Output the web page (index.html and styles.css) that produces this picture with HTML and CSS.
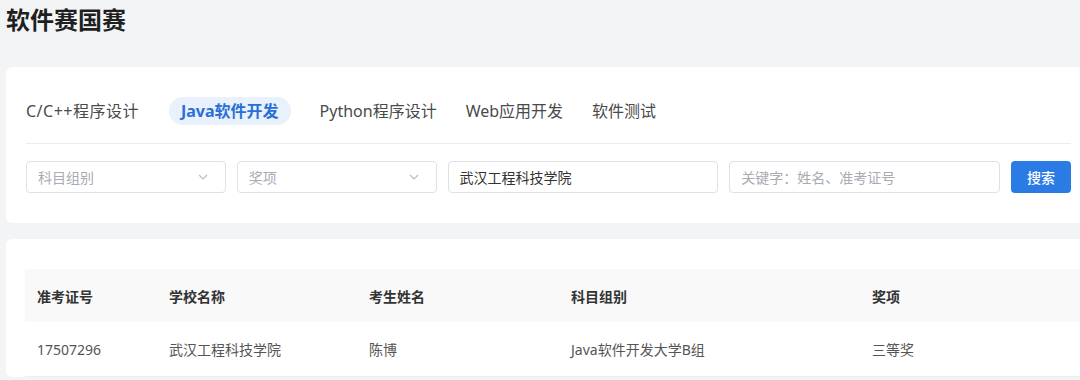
FILE: index.html
```html
<!DOCTYPE html>
<html lang="zh-CN">
<head>
    <meta charset="UTF-8">
    <meta name="viewport" content="width=device-width, initial-scale=1.0">
    <title>软件赛国赛</title>
    <link rel="stylesheet" href="styles.css">
</head>
<body>
    <div class="page">
        <!-- title -->
        <h1 class="page-title">软件赛国赛</h1>

        <!-- filter card -->
        <div class="card filter-card">
            <div class="tabs">
                <span class="tab tab-wide">C/C++程序设计</span>
                <span class="tab active">Java软件开发</span>
                <span class="tab">Python程序设计</span>
                <span class="tab">Web应用开发</span>
                <span class="tab">软件测试</span>
            </div>
            <div class="divider"></div>
            <div class="filters">
                <div class="field select w-200">
                    <span class="placeholder">科目组别</span>
                    <svg class="chevron" width="10" height="6" viewBox="0 0 10 6"><path d="M1 1l4 4 4-4" fill="none" stroke="#b8bcc4" stroke-width="1.1"/></svg>
                </div>
                <div class="field select w-200">
                    <span class="placeholder">奖项</span>
                    <svg class="chevron" width="10" height="6" viewBox="0 0 10 6"><path d="M1 1l4 4 4-4" fill="none" stroke="#b8bcc4" stroke-width="1.1"/></svg>
                </div>
                <div class="field w-270">
                    <span class="value">武汉工程科技学院</span>
                </div>
                <div class="field w-270">
                    <span class="placeholder">关键字：姓名、准考证号</span>
                </div>
                <button class="search-btn">搜索</button>
            </div>
        </div>

        <!-- result card -->
        <div class="card table-card">
            <table class="result-table">
                <thead>
                    <tr>
                        <th class="col-id">准考证号</th>
                        <th class="col-school">学校名称</th>
                        <th class="col-name">考生姓名</th>
                        <th class="col-group">科目组别</th>
                        <th>奖项</th>
                    </tr>
                </thead>
                <tbody>
                    <tr>
                        <td>17507296</td>
                        <td>武汉工程科技学院</td>
                        <td>陈博</td>
                        <td>Java软件开发大学B组</td>
                        <td>三等奖</td>
                    </tr>
                </tbody>
            </table>
        </div>
    </div>
</body>
</html>
```

FILE: styles.css
```css
body {
    margin: 0;
    background: #f3f4f6;
    font-family: "Noto Sans", "Noto Sans CJK SC", sans-serif;
    color: #333;
    overflow: hidden;
}

.page {
    width: 1085px;
    padding-left: 6px;
}

/* title */
.page-title {
    margin: 4px 0 31px;
    font-size: 24px;
    line-height: 32px;
    font-weight: 700;
    color: #1f1f1f;
}

/* cards */
.card {
    background: #fff;
    border-radius: 6px;
}

.filter-card {
    padding: 30px 20px 30px;
}

/* tabs */
.tabs {
    display: flex;
    align-items: center;
    gap: 29px;
    height: 28px;
}

.tab {
    font-size: 16px;
    line-height: 28px;
    color: #4a4a4a;
    white-space: nowrap;
}

.tab-wide {
    letter-spacing: 0.5px;
}

.tab.active {
    padding: 0 12px;
    margin-left: 1px;
    background: #e8f1fc;
    border-radius: 14px;
    color: #2a6fd6;
    font-weight: 700;
}

.divider {
    height: 1px;
    background: #ececec;
    margin: 18px 0 17px;
}

/* filters */
.filters {
    display: flex;
    gap: 11px;
}

.field {
    box-sizing: border-box;
    height: 32px;
    border: 1px solid #dfe1e6;
    border-radius: 4px;
    padding: 0 11px;
    display: flex;
    align-items: center;
    justify-content: space-between;
    font-size: 14px;
}

.w-200 { width: 200px; }
.w-270 { width: 271px; }

.placeholder {
    color: #a8abb2;
}

.value {
    color: #333;
}

.chevron {
    margin-right: 6px;
}

.search-btn {
    width: 60px;
    height: 32px;
    border: none;
    border-radius: 4px;
    background: #2b7be5;
    color: #fff;
    font-family: inherit;
    font-size: 14px;
    font-weight: 500;
}

/* table */
.table-card {
    margin-top: 16px;
    padding: 30px 0 0 19px;
}

.result-table {
    width: 100%;
    border-collapse: collapse;
    font-size: 14px;
}

.result-table th,
.result-table td {
    text-align: left;
    padding: 0 12px;
    white-space: nowrap;
}

.result-table th {
    height: 53px;
    background: #f9f9fa;
    color: #333;
    font-weight: 600;
}

.result-table td {
    height: 54px;
    color: #555;
    border-bottom: 1px solid #ebeef2;
}

.col-id { width: 108px; }
.col-school { width: 176px; }
.col-name { width: 178px; }
.col-group { width: 277px; }
```
